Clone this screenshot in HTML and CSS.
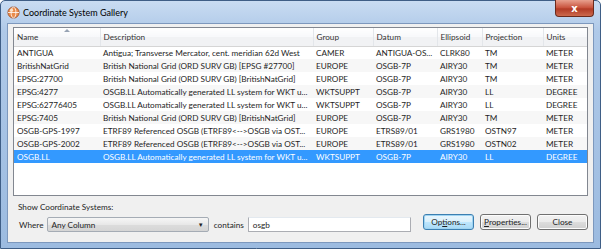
FILE: index.html
```html
<!DOCTYPE html>
<html lang="en">
<head>
  <meta charset="UTF-8" />
  <title>Coordinate System Gallery</title>
  <link rel="stylesheet" href="styles.css">
</head>
<body>

<div class="window">
  <div class="titlebar">
    <svg class="app-icon" width="13" height="13" viewBox="0 0 13 13">
      <circle cx="6.5" cy="6.5" r="5.6" fill="#e98b4a" stroke="#9c4a22" stroke-width="0.8"/>
      <ellipse cx="6.5" cy="6.5" rx="2.4" ry="5.4" fill="none" stroke="#fff" stroke-width="0.8"/>
      <line x1="1" y1="6.5" x2="12" y2="6.5" stroke="#fff" stroke-width="0.8"/>
      <circle cx="4.5" cy="4.2" r="1.6" fill="#fbe2c8"/>
    </svg>
    <span class="title">Coordinate System Gallery</span>
    <div class="close-btn">x</div>
  </div>

  <div class="client">
    <div class="grid-box">
      <table class="grid">
        <colgroup>
          <col style="width:86px"><col style="width:213px"><col style="width:60px">
          <col style="width:64px"><col style="width:45px"><col style="width:61px"><col style="width:44px">
        </colgroup>
        <thead>
          <tr>
            <th class="sorted">Name</th><th>Description</th><th>Group</th><th>Datum</th>
            <th>Ellipsoid</th><th>Projection</th><th>Units</th>
          </tr>
        </thead>
        <tbody>
          <tr><td>ANTIGUA</td><td>Antigua; Transverse Mercator, cent. meridian 62d West</td><td>CAMER</td><td>ANTIGUA-OS...</td><td>CLRK80</td><td>TM</td><td>METER</td></tr>
          <tr><td>BritishNatGrid</td><td>British National Grid (ORD SURV GB) [EPSG #27700]</td><td>EUROPE</td><td>OSGB-7P</td><td>AIRY30</td><td>TM</td><td>METER</td></tr>
          <tr><td>EPSG:27700</td><td>British National Grid (ORD SURV GB) [BritishNatGrid]</td><td>EUROPE</td><td>OSGB-7P</td><td>AIRY30</td><td>TM</td><td>METER</td></tr>
          <tr><td>EPSG:4277</td><td>OSGB.LL Automatically generated LL system for WKT u...</td><td>WKTSUPPT</td><td>OSGB-7P</td><td>AIRY30</td><td>LL</td><td>DEGREE</td></tr>
          <tr><td>EPSG:62776405</td><td>OSGB.LL Automatically generated LL system for WKT u...</td><td>WKTSUPPT</td><td>OSGB-7P</td><td>AIRY30</td><td>LL</td><td>DEGREE</td></tr>
          <tr><td>EPSG:7405</td><td>British National Grid (ORD SURV GB) [BritishNatGrid]</td><td>EUROPE</td><td>OSGB-7P</td><td>AIRY30</td><td>TM</td><td>METER</td></tr>
          <tr><td>OSGB-GPS-1997</td><td>ETRF89 Referenced OSGB (ETRF89&lt;--&gt;OSGB via OST...</td><td>EUROPE</td><td>ETRS89/01</td><td>GRS1980</td><td>OSTN97</td><td>METER</td></tr>
          <tr><td>OSGB-GPS-2002</td><td>ETRF89 Referenced OSGB (ETRF89&lt;--&gt;OSGB via OST...</td><td>EUROPE</td><td>ETRS89/01</td><td>GRS1980</td><td>OSTN02</td><td>METER</td></tr>
          <tr class="selected"><td>OSGB.LL</td><td>OSGB.LL Automatically generated LL system for WKT u...</td><td>WKTSUPPT</td><td>OSGB-7P</td><td>AIRY30</td><td>LL</td><td>DEGREE</td></tr>
        </tbody>
      </table>
    </div>

    <div class="filter-label">Show Coordinate Systems:</div>
    <div class="filter-row">
      <span class="where">Where</span>
      <div class="combo">
        <span>Any Column</span>
        <span class="combo-arrow">&#9660;</span>
      </div>
      <span class="contains">contains</span>
      <div class="textbox">osgb</div>
      <div class="buttons">
        <button class="btn focused">Op<u>t</u>ions...</button>
        <button class="btn"><u>P</u>roperties...</button>
        <button class="btn">Close</button>
      </div>
    </div>
  </div>
</div>

</body>
</html>
```

FILE: styles.css
```css
* {
  box-sizing: border-box;
}
html, body {
  margin: 0;
  padding: 0;
  width: 602px;
  height: 251px;
  overflow: hidden;
  font-family: 'Lato', 'Liberation Sans', sans-serif;
  font-size: 8.2px;
  color: #1e1e1e;
  background: #fff;
}

.window {
  width: 601px;
  height: 249px;
  display: flex;
  flex-direction: column;
  background: linear-gradient(#c9dcf2 0px, #afc9e8 30px, #9cbbe0 100%);
  border: 1px solid #3f5e86;
  border-radius: 5px 5px 0 0;
  padding: 0 6px 5px 6px;
}

.titlebar {
  height: 22px;
  display: flex;
  align-items: center;
  position: relative;
}

.app-icon {
  margin: 0 3px 0 0;
}

.title {
  font-size: 9px;
  color: #000;
}

.close-btn {
  position: absolute;
  top: -1px;
  right: 0;
  width: 39px;
  height: 17px;
  background: linear-gradient(#e8a08e, #c7503a 50%, #b13a25 55%, #cc6a4e);
  border: 1px solid #6b2a1c;
  border-top: none;
  border-radius: 0 0 4px 4px;
  color: #fff;
  font-family: 'DejaVu Sans', sans-serif;
  font-weight: bold;
  font-size: 10px;
  display: flex;
  align-items: center;
  justify-content: center;
}

.client {
  flex: 1;
  background: #f0f0f0;
  border: 1px solid #7d98bd;
  padding: 3px 5px 0 5px;
  display: flex;
  flex-direction: column;
}

.grid-box {
  height: 169px;
  width: 575px;
  background: #fff;
  border: 1px solid #828790;
  overflow: hidden;
}

.grid {
  border-collapse: collapse;
  table-layout: fixed;
  width: 573px;
}

.grid th {
  height: 18px;
  font-weight: normal;
  text-align: left;
  padding: 0 0 0 3px;
  background: linear-gradient(#ffffff, #f7f8fa 50%, #f1f2f4 50%, #f1f2f4);
  border-right: 1px solid #e3e6ea;
  border-bottom: 1px solid #d5d5d5;
  color: #333;
  position: relative;
}

.grid th.sorted::after {
  content: '';
  position: absolute;
  top: 1px;
  left: 50px;
  border-left: 3px solid transparent;
  border-right: 3px solid transparent;
  border-bottom: 3px solid #97a3b4;
}

.grid td {
  height: 13px;
  padding: 0 0 0 3px;
  white-space: nowrap;
  overflow: hidden;
}

.grid tbody tr:nth-child(even) td {
  background: #f7f7f7;
}

.grid tbody tr.selected td {
  background: #3399ff;
  color: #fff;
}

.filter-label {
  margin: 4px 0 0 5px;
  height: 14px;
  line-height: 14px;
}

.filter-row {
  display: flex;
  align-items: center;
  margin-top: 3px;
  padding-left: 6px;
}

.where {
  margin-right: 4px;
}

.combo {
  width: 165px;
  height: 15px;
  border: 1px solid #a5acb5;
  border-radius: 2px;
  background: linear-gradient(#f6f6f6, #e8e8e8 50%, #dcdcdc 51%, #d5d5d5);
  display: flex;
  align-items: center;
  justify-content: space-between;
  padding: 0 4px 0 3px;
}

.combo-arrow {
  font-size: 6px;
  color: #222;
}

.contains {
  margin: 0 4px 0 5px;
}

.textbox {
  width: 167px;
  height: 15px;
  border: 1px solid #abadb3;
  border-top-color: #e3e9ef;
  background: #fff;
  padding: 1px 0 0 4px;
  line-height: 12px;
}

.buttons {
  display: flex;
  gap: 6px;
  margin-left: 12px;
  margin-top: -5px;
}

.btn {
  width: 51px;
  height: 16px;
  padding: 0;
  font-family: 'Lato', 'Liberation Sans', sans-serif;
  font-size: 8.2px;
  color: #1e1e1e;
  border: 1px solid #707070;
  border-radius: 3px;
  background: linear-gradient(#f2f2f2, #ebebeb 50%, #dddddd 51%, #cfcfcf);
  box-shadow: inset 0 0 0 1px #fcfcfc;
}

.btn.focused {
  border-color: #3c7fb1;
  background: linear-gradient(#eaf6fd, #d9f0fc 50%, #bee6fd 51%, #a7d9f5);
  box-shadow: inset 0 0 0 1px #9fd4f2;
}
```
